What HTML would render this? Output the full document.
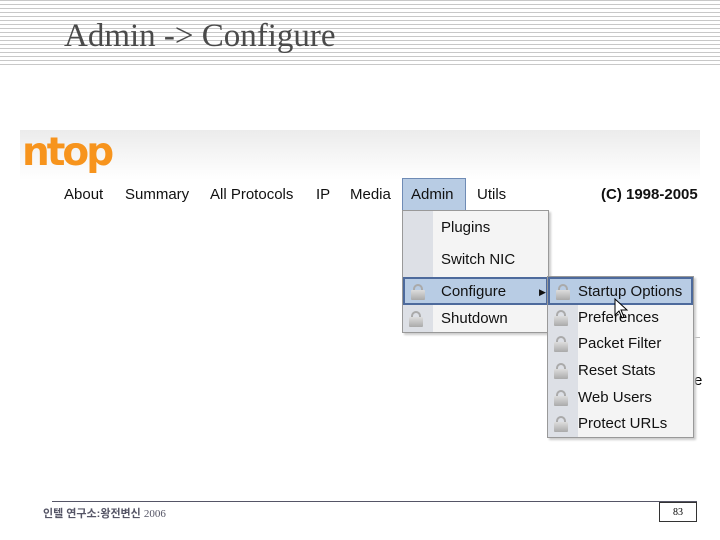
<!DOCTYPE html>
<html><head><meta charset="utf-8"><style>
*{margin:0;padding:0;box-sizing:border-box}
body{width:720px;height:540px;background:#fff;position:relative;overflow:hidden;font-family:"Liberation Sans",sans-serif}
.stripes{position:absolute;left:0;top:0;width:720px;height:66px;background:repeating-linear-gradient(to bottom,#c8c8c8 0,#c8c8c8 1px,#fff 1px,#fff 4px)}
.title{position:absolute;left:64px;top:16px;font-family:"Liberation Serif",serif;font-size:33px;color:#4a4a4a;line-height:40px;white-space:nowrap}
.shot{position:absolute;left:20px;top:130px;width:680px;height:310px;background:linear-gradient(to bottom,#ececec 0,#fff 50px,#fff 100%)}
.logo{position:absolute;left:22px;top:130px;font-family:"DejaVu Sans",sans-serif;font-weight:bold;font-size:39px;color:#f7941d;letter-spacing:-3px}
.nav{position:absolute;top:186px;font-size:15px;color:#111}
.adminbox{position:absolute;left:402px;top:178px;width:64px;height:33px;background:#b8cce4;border:1px solid #6f8bb5;border-bottom:none}
.menu{position:absolute;background:#f4f4f4;border:1px solid #999;box-shadow:2px 2px 2px #ccc}
.menu .gut{position:absolute;left:0;top:0;bottom:0;width:30px;background:#dde0e6}
.it{position:absolute;left:0;right:0;height:26px;font-size:15px;color:#111;line-height:26px}
.it span{position:absolute;left:38px}
.sel{background:#b8cce4;border:2px solid #4d6a9c}
.lock{position:absolute;left:6px;top:5px;width:14px;height:16px}
.lock:before{content:"";position:absolute;left:2px;top:0;width:10px;height:10px;border:2px solid #aaa;border-radius:5px 5px 0 0;box-sizing:border-box}
.lock:after{content:"";position:absolute;left:0;top:6px;width:14px;height:10px;background:linear-gradient(#ddd,#aaa);border-radius:1px}
.foot{position:absolute;left:52px;top:501px;width:645px;border-top:1px solid #556}
.ft{position:absolute;left:43px;top:505px;font-size:11px;color:#556;font-family:"Liberation Sans","Noto Sans CJK KR",sans-serif;font-weight:bold}
.pg{position:absolute;left:659px;top:502px;width:38px;height:20px;border:1px solid #333;font-size:10px;text-align:center;line-height:20px;font-family:"Liberation Serif",serif}
</style></head><body>
<div class="stripes"></div>
<div class="title">Admin -&gt; Configure</div>
<div class="shot"></div>
<div class="logo">ntop</div>
<div class="adminbox"></div>
<div class="nav" style="left:64px">About</div>
<div class="nav" style="left:125px">Summary</div>
<div class="nav" style="left:210px">All Protocols</div>
<div class="nav" style="left:316px">IP</div>
<div class="nav" style="left:350px">Media</div>
<div class="nav" style="left:411px">Admin</div>
<div class="nav" style="left:477px">Utils</div>
<div class="nav" style="left:601px;font-weight:bold">(C) 1998-2005</div>
<div style="position:absolute;left:548px;top:337px;width:152px;border-top:1px solid #bbb"></div>
<div style="position:absolute;left:694px;top:372px;font-size:15px">e</div>

<div class="menu" style="left:402px;top:210px;width:147px;height:123px">
 <div class="gut"></div>
 <div class="it" style="top:4px"><span>Plugins</span></div>
 <div class="it" style="top:36px"><span>Switch NIC</span></div>
 <div class="it sel" style="top:66px;height:28px"><div class="lock"></div><span style="left:36px">Configure</span><span style="left:134px;font-size:9px">&#9654;</span></div>
 <div class="it" style="top:95px"><div class="lock"></div><span>Shutdown</span></div>
</div>
<div class="menu" style="left:547px;top:276px;width:147px;height:162px">
 <div class="gut"></div>
 <div class="it sel" style="top:0;height:28px"><div class="lock"></div><span style="left:28px">Startup Options</span></div>
 <div class="it" style="top:28px"><div class="lock"></div><span style="left:30px">Preferences</span></div>
 <div class="it" style="top:54px"><div class="lock"></div><span style="left:30px">Packet Filter</span></div>
 <div class="it" style="top:81px"><div class="lock"></div><span style="left:30px">Reset Stats</span></div>
 <div class="it" style="top:108px"><div class="lock"></div><span style="left:30px">Web Users</span></div>
 <div class="it" style="top:134px"><div class="lock"></div><span style="left:30px">Protect URLs</span></div>
</div>
<svg style="position:absolute;left:614px;top:298px" width="16" height="22"><path d="M1 1 L1 17 L5 13 L8 20 L10 19 L7 12 L13 12 Z" fill="#fff" stroke="#000" stroke-width="1"/></svg>

<div class="foot"></div>
<div class="ft">인텔 연구소:왕전변신 <span style="font-weight:normal;font-family:'Liberation Serif',serif">2006</span></div>
<div class="pg">83</div>
</body></html>
